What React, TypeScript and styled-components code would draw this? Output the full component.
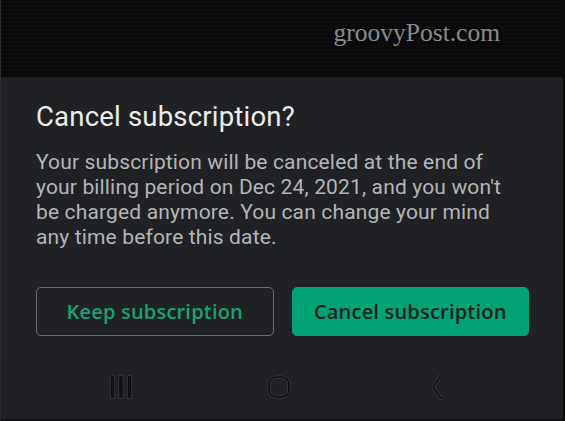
import React from 'react';
import styled, { createGlobalStyle } from 'styled-components';

const GlobalStyle = createGlobalStyle`
  html, body {
    margin: 0;
    padding: 0;
    background: #0a0a0b;
  }
  #root {
    width: 565px;
    height: 421px;
  }
`;

const Screen = styled.div`
  display: flex;
  flex-direction: column;
  width: 565px;
  height: 421px;
  overflow: hidden;
  border-left: 1px solid #2a2b2e;
  border-right: 2px solid #0b0b0c;
  box-sizing: border-box;
  font-family: Roboto, 'Liberation Sans', sans-serif;
`;

const Backdrop = styled.div`
  height: 78px;
  flex: none;
  display: flex;
  justify-content: flex-end;
  background-color: #0a0a0b;
  background-image: radial-gradient(#151517 0.6px, transparent 0.8px);
  background-size: 4px 4px;
  border-bottom: 1px solid #1c1c1e;
  box-sizing: border-box;
`;

const Watermark = styled.span`
  font-family: 'Liberation Serif', 'DejaVu Serif', serif;
  font-size: 25.5px;
  color: #8a8a8a;
  padding: 18px 63px 0 0;
`;

const Dialog = styled.div`
  flex: 1;
  display: flex;
  flex-direction: column;
  background: #202124;
  padding: 22px 34px 0 35px;
`;

const Title = styled.h2`
  margin: 0;
  font-size: 27.5px;
  font-weight: 400;
  color: #ececec;
  line-height: 34px;
  letter-spacing: 0.2px;
`;

const Body = styled.p`
  margin: 16px 0 0 0;
  max-width: 474px;
  font-size: 21px;
  line-height: 25px;
  color: #b4b5b7;
  letter-spacing: 0.15px;
`;

const Actions = styled.div`
  display: grid;
  grid-template-columns: 1fr 1fr;
  gap: 18px;
  margin-top: 37px;
`;

const Button = styled.button<{ $filled?: boolean }>`
  height: 49px;
  border-radius: 5px;
  font-family: 'Open Sans', Roboto, sans-serif;
  font-size: 20px;
  font-weight: 600;
  letter-spacing: 0.2px;
  cursor: pointer;
  border: 1.5px solid ${(p) => (p.$filled ? '#01a273' : '#6a6b6e')};
  background: ${(p) => (p.$filled ? '#01a273' : 'transparent')};
  color: ${(p) => (p.$filled ? '#1d1e20' : '#18a36e')};
`;

const NavBar = styled.div`
  height: 66px;
  flex: none;
  display: flex;
  justify-content: center;
  align-items: center;
  gap: 130px;
  padding: 0 6px 0 0;
  background: #1f2023;
  border-bottom: 2px solid #111113;
  box-sizing: border-box;
`;

const NavIcon = styled.svg`
  width: 28px;
  height: 28px;
  fill: none;
  stroke-linecap: round;
  stroke-linejoin: round;
`;

const Halo = ({ children }: { children: React.ReactNode }) => (
  <>
    <g stroke="#3c3d40" strokeWidth={3.2}>{children}</g>
    <g stroke="#0c0c0d" strokeWidth={1.7}>{children}</g>
  </>
);

export default function App() {
  return (
    <>
      <GlobalStyle />
      <Screen>
        <Backdrop>
          <Watermark>groovyPost.com</Watermark>
        </Backdrop>
        <Dialog>
          <Title>Cancel subscription?</Title>
          <Body>
            Your subscription will be canceled at the end of your billing period on Dec 24,
            2021, and you won't be charged anymore. You can change your mind any time before
            this date.
          </Body>
          <Actions>
            <Button>Keep subscription</Button>
            <Button $filled>Cancel subscription</Button>
          </Actions>
        </Dialog>
        <NavBar>
          <NavIcon viewBox="0 0 28 28">
            <Halo>
              <rect x="4.5" y="3.5" width="2" height="21" rx="1" />
              <rect x="13" y="3.5" width="2" height="21" rx="1" />
              <rect x="21.5" y="3.5" width="2" height="21" rx="1" />
            </Halo>
          </NavIcon>
          <NavIcon viewBox="0 0 28 28">
            <Halo>
              <rect x="4" y="4" width="20" height="20" rx="7" />
            </Halo>
          </NavIcon>
          <NavIcon viewBox="0 0 28 28">
            <Halo>
              <path d="M18 2.5 L10 14 L18 25.5" />
            </Halo>
          </NavIcon>
        </NavBar>
      </Screen>
    </>
  );
}
